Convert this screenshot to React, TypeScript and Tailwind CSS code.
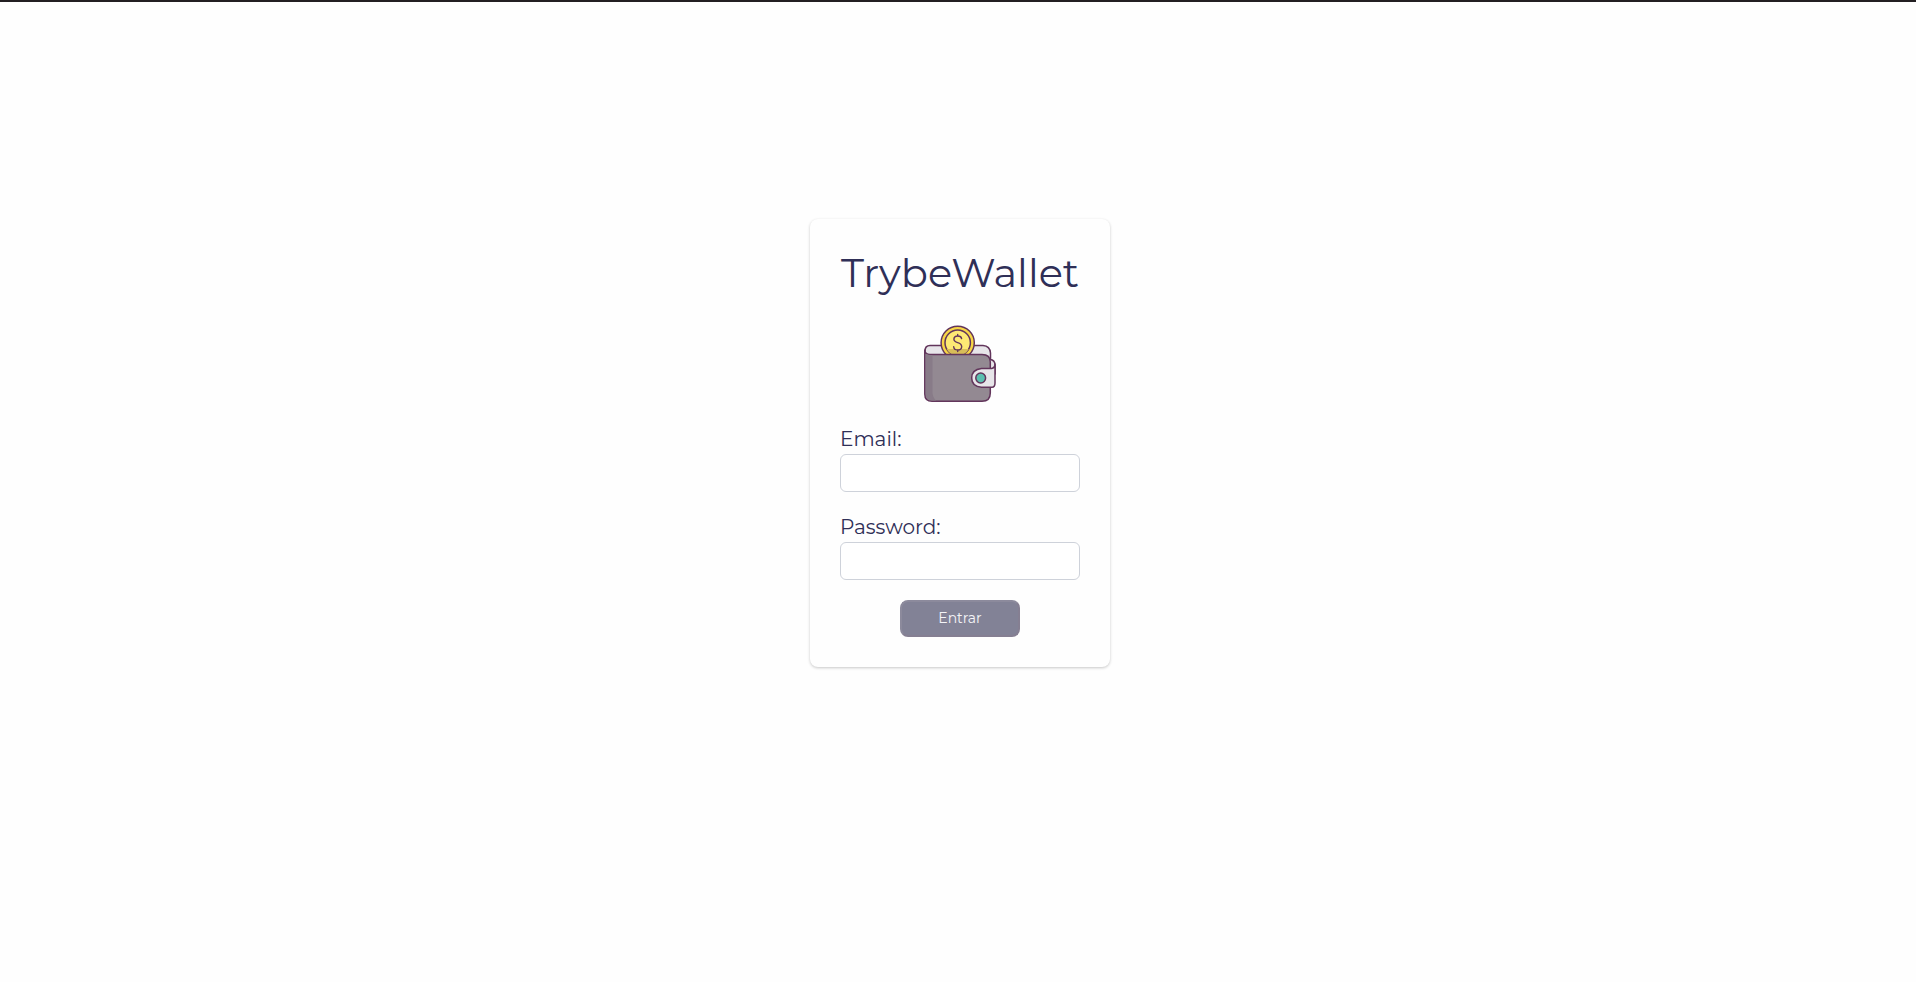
import { useState } from "react";

function WalletIcon() {
  return (
    <svg viewBox="0 0 74 80" className="h-20 w-[74px]" aria-hidden="true" fill="none" stroke="#62355b" strokeWidth="1.5" strokeLinejoin="round" strokeLinecap="round">
      <path d="M7 21.500H60Q67 22 67.500 29V45H2V27Q2 21.500 7 21.500Z" fill="#e7e5e9" />
      <circle cx="34.700" cy="18.800" r="16.600" fill="#f7d645" />
      <circle cx="34.700" cy="18.800" r="12.700" fill="#fde974" />
      <path d="M23.600 25H45.800Q42.500 31.200 34.700 31.200T23.600 25Z" fill="#d8bd58" stroke="none" />
      <path d="M38.600 14.600Q38.200 12 34.700 12T30.900 15.100Q30.900 17.600 34.700 18.700T38.700 22.700Q38.500 26 34.700 26T30.700 22.800M34.700 10.400V12M34.700 26V27.600" strokeWidth="1.400" />
      <path d="M67 35.500Q72 36 72 41V50H64V35.500Z" fill="#e7e5e9" />
      <path d="M1.800 26Q2 30.500 7 30.500H59Q67.300 30.500 67.300 38V69Q67.300 77.300 59 77.300H9Q1.800 77.300 1.800 70Z" fill="#938992" />
      <path d="M2.600 29.500Q5 31.200 9.500 31.200V69Q10 74 13 76.500H9Q2.600 76.500 2.600 70Z" fill="#887b88" stroke="none" />
      <path d="M68.500 44.500Q72 44 72 40V59Q72 63.200 69 63.200H58.500Q48.700 62.500 48.700 54T58.500 44.500Z" fill="#e7e5e9" />
      <circle cx="57.700" cy="54" r="4.900" fill="#5bc0b0" />
    </svg>
  );
}

export default function App() {
  const [email, setEmail] = useState("");
  const [password, setPassword] = useState("");
  const field = "h-[38px] w-full rounded-md border border-[#ced2da] bg-white px-3 text-base outline-none";
  return (
    <main className="flex min-h-screen flex-col items-center border-t-2 border-[#231f22] bg-[#fefefe] pt-[217px] pl-1 font-[Montserrat,Inter,sans-serif] text-[#2f2f57]">
      <form
        onSubmit={(event) => event.preventDefault()}
        className="flex w-[300px] flex-col items-center rounded-lg bg-[#fefefe] p-[30px] shadow-[0_1px_3px_rgba(0,0,0,0.22)]"
      >
        <h1 className="text-[40px] leading-12 font-normal">TrybeWallet</h1>
        <div className="mt-[27px] mb-5">
          <WalletIcon />
        </div>
        <label htmlFor="email" className="w-full text-xl leading-[30px]">Email:</label>
        <input id="email" type="email" value={email} onChange={(e) => setEmail(e.target.value)} className={field} />
        <label htmlFor="password" className="mt-5 w-full text-xl leading-[30px]">Password:</label>
        <input id="password" type="password" value={password} onChange={(e) => setPassword(e.target.value)} className={field} />
        <button type="submit" disabled className="mt-5 h-[37px] w-[120px] rounded-lg border-2 border-t-[#8c8a9c] border-r-[#857f92] border-b-[#857f92] border-l-[#8c8a9c] bg-[#828296] pb-0.5 text-sm text-[#f4f4f7]">
          Entrar
        </button>
      </form>
    </main>
  );
}
